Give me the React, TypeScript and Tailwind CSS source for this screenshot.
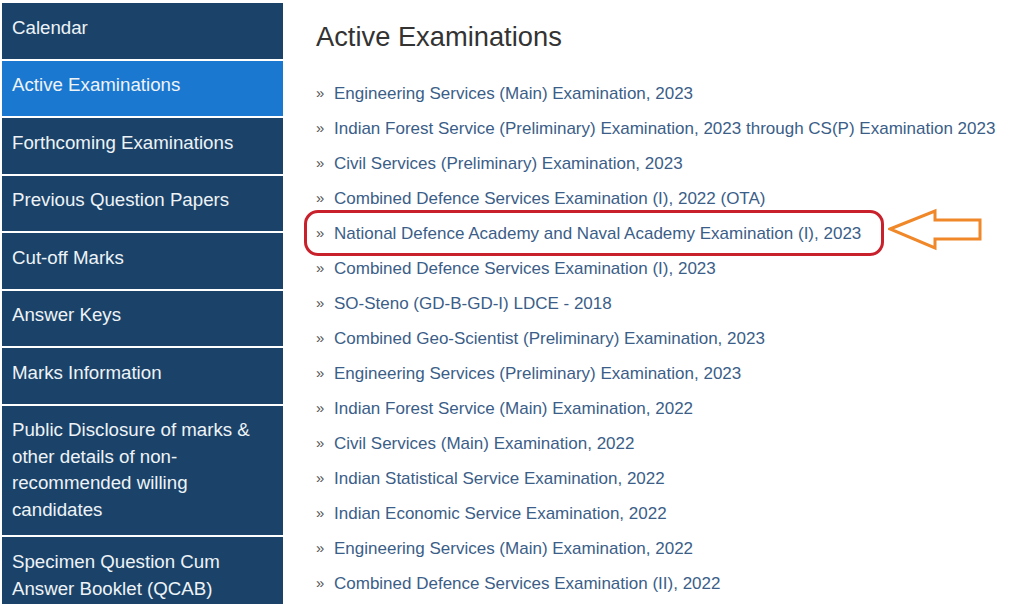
import React from "react"

const menu = [
  "Calendar",
  "Active Examinations",
  "Forthcoming Examinations",
  "Previous Question Papers",
  "Cut-off Marks",
  "Answer Keys",
  "Marks Information",
  "Public Disclosure of marks & other details of non-recommended willing candidates",
  "Specimen Question Cum Answer Booklet (QCAB)",
]

const exams = [
  "Engineering Services (Main) Examination, 2023",
  "Indian Forest Service (Preliminary) Examination, 2023 through CS(P) Examination 2023",
  "Civil Services (Preliminary) Examination, 2023",
  "Combined Defence Services Examination (I), 2022 (OTA)",
  "National Defence Academy and Naval Academy Examination (I), 2023",
  "Combined Defence Services Examination (I), 2023",
  "SO-Steno (GD-B-GD-I) LDCE - 2018",
  "Combined Geo-Scientist (Preliminary) Examination, 2023",
  "Engineering Services (Preliminary) Examination, 2023",
  "Indian Forest Service (Main) Examination, 2022",
  "Civil Services (Main) Examination, 2022",
  "Indian Statistical Service Examination, 2022",
  "Indian Economic Service Examination, 2022",
  "Engineering Services (Main) Examination, 2022",
  "Combined Defence Services Examination (II), 2022",
]

function LeftArrow() {
  return (
    <svg width="100" height="44" viewBox="0 0 100 44" className="absolute left-[572px] top-[-8px]">
      <path
        d="M2 21 L47 3 L47 12 L92 12 L92 31 L47 31 L47 40 Z"
        fill="none"
        stroke="#f0882a"
        strokeWidth="3"
      />
    </svg>
  )
}

export default function App() {
  return (
    <div className="w-[1024px] h-[604px] overflow-hidden bg-white flex font-['Liberation_Sans',Arial,sans-serif]">
      {/* Sidebar */}
      <aside className="w-[283px] shrink-0 pl-[2px] pt-[3px] flex flex-col gap-[2px]">
        {menu.map((item) => (
          <div
            key={item}
            className={`shrink-0 min-h-[55.5px] px-[10px] py-[11.5px] text-[18.7px] leading-[26.7px] text-[#eef3f8] ${
              item === "Active Examinations" ? "bg-[#1b78d0]" : "bg-[#1b4369]"
            }`}
          >
            {item}
          </div>
        ))}
      </aside>

      {/* Main content */}
      <main className="flex-1 pl-[33px] pt-[19px]">
        <h1 className="text-[27.3px] leading-[36px] text-[#333333] mb-[21px]">Active Examinations</h1>
        <ul className="flex flex-col">
          {exams.map((exam, i) => (
            <li key={i} className="relative flex items-center h-[35px] text-[17px] text-[#3b5e88]">
              <span className="text-[#555555] w-[18px] text-[15px]">»</span>
              <span>{exam}</span>
              {i === 4 && (
                <>
                  <div className="absolute left-[-12px] top-[-6px] w-[580px] h-[46px] border-[3px] border-[#c9212c] rounded-[14px]" />
                  <LeftArrow />
                </>
              )}
            </li>
          ))}
        </ul>
      </main>
    </div>
  )
}
